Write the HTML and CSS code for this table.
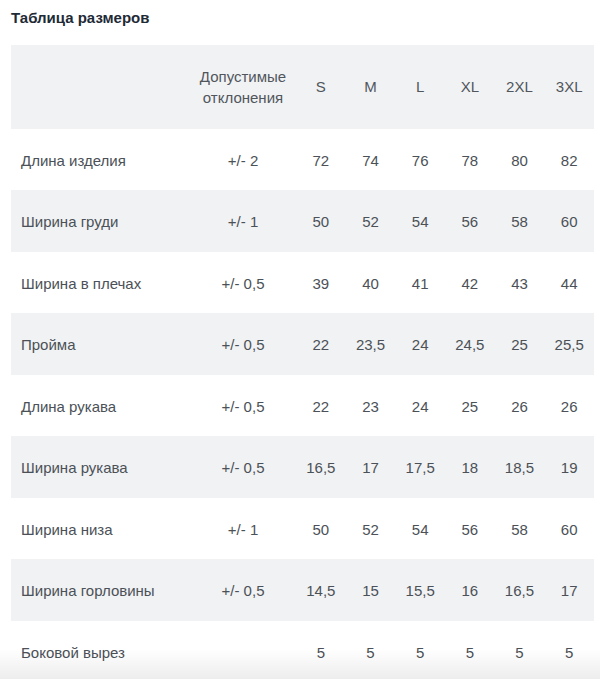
FILE: index.html
```html
<!DOCTYPE html>
<html lang="ru">
<head>
<meta charset="utf-8">
<title>Таблица размеров</title>
<link rel="stylesheet" href="styles.css">
</head>
<body>
<div class="page">
  <h2 class="title">Таблица размеров</h2>
  <table class="sizes">
    <colgroup>
      <col class="c-label"><col class="c-tol">
      <col class="c-size"><col class="c-size"><col class="c-size"><col class="c-size"><col class="c-size"><col class="c-size">
    </colgroup>
    <thead>
      <tr><th></th><th>Допустимые<br>отклонения</th><th>S</th><th>M</th><th>L</th><th>XL</th><th>2XL</th><th>3XL</th></tr>
    </thead>
    <tbody>
      <tr><td>Длина изделия</td><td>+/- 2</td><td>72</td><td>74</td><td>76</td><td>78</td><td>80</td><td>82</td></tr>
      <tr><td>Ширина груди</td><td>+/- 1</td><td>50</td><td>52</td><td>54</td><td>56</td><td>58</td><td>60</td></tr>
      <tr><td>Ширина в плечах</td><td>+/- 0,5</td><td>39</td><td>40</td><td>41</td><td>42</td><td>43</td><td>44</td></tr>
      <tr><td>Пройма</td><td>+/- 0,5</td><td>22</td><td>23,5</td><td>24</td><td>24,5</td><td>25</td><td>25,5</td></tr>
      <tr><td>Длина рукава</td><td>+/- 0,5</td><td>22</td><td>23</td><td>24</td><td>25</td><td>26</td><td>26</td></tr>
      <tr><td>Ширина рукава</td><td>+/- 0,5</td><td>16,5</td><td>17</td><td>17,5</td><td>18</td><td>18,5</td><td>19</td></tr>
      <tr><td>Ширина низа</td><td>+/- 1</td><td>50</td><td>52</td><td>54</td><td>56</td><td>58</td><td>60</td></tr>
      <tr><td>Ширина горловины</td><td>+/- 0,5</td><td>14,5</td><td>15</td><td>15,5</td><td>16</td><td>16,5</td><td>17</td></tr>
      <tr><td>Боковой вырез</td><td></td><td>5</td><td>5</td><td>5</td><td>5</td><td>5</td><td>5</td></tr>
    </tbody>
  </table>
  <div class="fade"></div>
</div>
</body>
</html>
```
FILE: styles.css
```css
html, body {
  margin: 0;
  padding: 0;
  background: #fff;
}
body {
  font-family: "Liberation Sans", Arial, sans-serif;
  color: #4b5157;
  overflow: hidden;
  height: 679px;
}
.page {
  padding: 9px 6px 0 11px;
}
.title {
  margin: 0 0 18px;
  font-size: 15px;
  line-height: 18px;
  font-weight: bold;
  color: #1e2a36;
}
.sizes {
  width: 583px;
  border-collapse: collapse;
  table-layout: fixed;
  font-size: 15px;
  line-height: 21.5px;
}
.c-label { width: 179px; }
.c-tol { width: 106px; }
.c-size { width: 49.67px; }
.sizes th {
  font-weight: normal;
  background: #f1f2f4;
  padding: 20.5px 0 20px;
  text-align: center;
  color: #50565c;
}
.sizes td {
  padding: 21px 0 19px;
  text-align: center;
  white-space: nowrap;
}
.sizes td:first-child {
  text-align: left;
  padding-left: 10px;
}
.sizes tbody tr:nth-child(even) td {
  background: #f1f2f4;
}
.fade {
  position: fixed;
  left: 0;
  right: 0;
  bottom: 0;
  height: 30px;
  background: linear-gradient(to bottom, rgba(0,0,0,0) 0%, rgba(0,0,0,0.07) 100%);
  pointer-events: none;
}
```
